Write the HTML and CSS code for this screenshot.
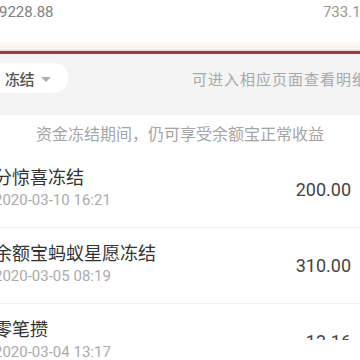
FILE: index.html
```html
<!DOCTYPE html>
<html lang="zh-CN">
<head>
<meta charset="utf-8">
<link rel="stylesheet" href="styles.css">
</head>
<body>
<div class="page">
  <div class="summary">
    <span class="sum-left">9228.88</span>
    <span class="sum-right">733.16</span>
  </div>
  <div class="redline"></div>
  <div class="filterbar">
    <div class="pill"><span class="pill-text">冻结</span><span class="tri"></span></div>
    <span class="hint">可进入相应页面查看明细</span>
  </div>
  <div class="info">资金冻结期间，仍可享受余额宝正常收益</div>
  <ul class="list">
    <li class="row">
      <div class="left">
        <div class="title">分惊喜冻结</div>
        <div class="date">2020-03-10 16:21</div>
      </div>
      <div class="amount">200.00</div>
      <span class="chev"></span>
    </li>
    <li class="row">
      <div class="left">
        <div class="title">余额宝蚂蚁星愿冻结</div>
        <div class="date">2020-03-05 08:19</div>
      </div>
      <div class="amount">310.00</div>
      <span class="chev"></span>
    </li>
    <li class="row">
      <div class="left">
        <div class="title">零笔攒</div>
        <div class="date">2020-03-04 13:17</div>
      </div>
      <div class="amount">13.16</div>
      <span class="chev"></span>
      <div class="cover"></div>
    </li>
  </ul>
</div>
</body>
</html>
```
FILE: styles.css
```css
html, body {
  margin: 0;
  padding: 0;
  background: #ffffff;
}
body {
  width: 360px;
  height: 360px;
  overflow: hidden;
  font-family: Roboto, "Noto Sans CJK SC", sans-serif;
}
.page {
  width: 360px;
}
.summary {
  height: 48px;
  display: flex;
  justify-content: space-between;
  align-items: flex-start;
  padding-top: 3px;
  box-sizing: border-box;
  font-size: 15px;
  line-height: 18px;
  background: linear-gradient(#ffffff 0, #ffffff 38px, #fcf0f0 48px);
}
.sum-left {
  color: #808080;
  margin-left: -1px;
}
.sum-right {
  color: #a09683;
  margin-right: -9px;
}
.redline {
  height: 3px;
  margin-top: 3px;
  background: #9f3545;
  box-shadow: 0 0 3px 1px rgba(225, 120, 135, 0.55);
}
.filterbar {
  height: 61px;
  background: #f4f4f4;
  display: flex;
  align-items: flex-start;
  justify-content: space-between;
  padding-top: 9px;
  box-sizing: border-box;
}
.pill {
  width: 88px;
  height: 30px;
  margin-left: -20px;
  background: #ffffff;
  border-radius: 14px;
  display: flex;
  align-items: center;
  padding-left: 25px;
  box-sizing: border-box;
}
.pill-text {
  font-size: 15px;
  color: #555555;
  font-weight: 500;
  letter-spacing: -0.5px;
}
.tri {
  width: 0;
  height: 0;
  margin-left: 7px;
  margin-top: 2px;
  border-left: 5px solid transparent;
  border-right: 5px solid transparent;
  border-top: 5px solid #b0b0b0;
}
.hint {
  font-size: 15px;
  letter-spacing: 1px;
  color: #a8a8a8;
  white-space: nowrap;
  margin-top: 5px;
  margin-right: -8px;
}
.info {
  height: 37px;
  padding-top: 10px;
  box-sizing: border-box;
  text-align: center;
  font-size: 16px;
  line-height: 20px;
  color: #a5a5a5;
}
.list {
  list-style: none;
  margin: 0;
  padding: 0;
}
.row {
  position: relative;
  height: 76px;
  box-sizing: border-box;
  padding-top: 14px;
  border-bottom: 1px solid #efefef;
  display: flex;
  align-items: center;
}
.left {
  flex: 1;
  margin-left: -6px;
  align-self: flex-start;
}
.title {
  font-size: 18px;
  line-height: 24px;
  color: #333333;
  white-space: nowrap;
}
.date {
  font-size: 15px;
  line-height: 20px;
  color: #ababab;
  white-space: nowrap;
}
.amount {
  font-size: 18px;
  color: #444444;
  margin-right: 7px;
  margin-top: -14px;
}
.chev {
  width: 8px;
  height: 8px;
  border-top: 1px solid #e2e2e2;
  border-right: 1px solid #e2e2e2;
  transform: rotate(45deg);
  margin-right: -7px;
  margin-top: -14px;
}
.cover {
  position: absolute;
  right: 0;
  top: 36px;
  width: 80px;
  height: 40px;
  background: #ffffff;
}
```
